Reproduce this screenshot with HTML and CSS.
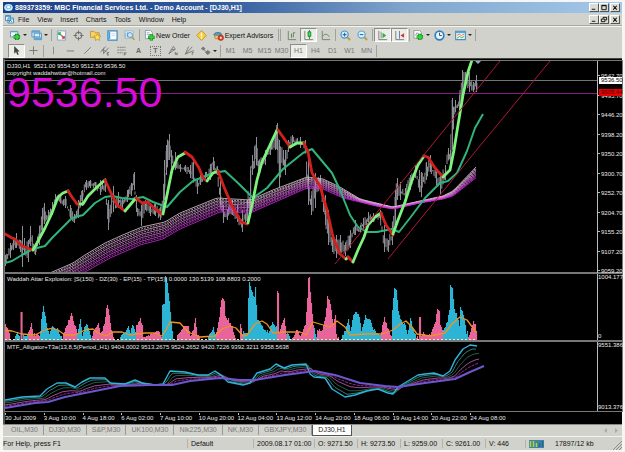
FILE: index.html
```html
<!DOCTYPE html>
<html lang="en">
<head>
<meta charset="utf-8">
<title>MBC Financial Services Ltd. - Demo Account</title>
<link rel="stylesheet" href="styles.css">
</head>
<body>
<div class="window">
  <header class="titlebar">
    <svg class="app-icon" viewBox="0 0 9 9"><ellipse cx="4.500" cy="4.500" rx="4.300" ry="3.500" fill="#c4ecf8"/><ellipse cx="4.500" cy="4" rx="2.800" ry="1.800" fill="#3ca0c8"/><path d="M2 4l2.500-1.500L7 4 4.500 5.500z" fill="#fff"/></svg>
    <h1>889373359: MBC Financial Services Ltd. - Demo Account - [DJ30,H1]</h1>
    <div class="winbtns">
      <button aria-label="Minimize"><svg viewBox="0 0 9 8"><path d="M2 6h4" stroke="#000"/></svg></button><button aria-label="Maximize"><svg viewBox="0 0 9 8"><path d="M2 1.500h5v5H2zM2 2h5" fill="none" stroke="#000"/></svg></button><button class="close" aria-label="Close"><svg viewBox="0 0 9 8"><path d="M2.500 2l4 4.500m0-4.500l-4 4.500" stroke="#000" stroke-width="1.200"/></svg></button>
    </div>
  </header>
  <nav class="menubar">
    <svg class="app-icon" viewBox="0 0 9 9"><path d="M.5.5h5v5h-5zM3 3h5.500v5H3z" fill="#eaf6fc" stroke="#4f90bc"/><path d="M1 1.500h4M3.500 4h4.500" stroke="#4fa8d8"/><path d="M4 7l1.500-1.500L7 6.500" fill="none" stroke="#479"/></svg>
    <button>File</button><button>View</button><button>Insert</button><button>Charts</button><button>Tools</button><button>Window</button><button>Help</button>
    <div class="winbtns">
      <button aria-label="Minimize chart"><svg viewBox="0 0 9 8"><path d="M2 6h4" stroke="#000"/></svg></button><button aria-label="Restore chart"><svg viewBox="0 0 9 8"><path d="M1.500 3.500h4v3h-4zM3.500 3V1.500h4v3H6" fill="none" stroke="#000"/></svg></button><button class="close" aria-label="Close chart"><svg viewBox="0 0 9 8"><path d="M2.500 2l4 4.500m0-4.500l-4 4.500" stroke="#000" stroke-width="1.200"/></svg></button>
    </div>
  </nav>
  <div class="toolbar main-tools">
    <button class="drop" aria-label="New chart"><svg viewBox="0 0 12 12"><path d="M.5 1.500h8v6h-8z" fill="#eef7fc" stroke="#5c94b8"/><path d="M.5 2h8" stroke="#5aa0d0"/><path d="M7.500 4v7M4 7.500h7" stroke="#0b7a20" stroke-width="4"/><path d="M7.500 5v5.500M4.500 7.500h6" stroke="#35d235" stroke-width="2.400"/></svg></button>
    <button class="drop" aria-label="Profiles"><svg viewBox="0 0 12 12"><path d="M3.500 3.500h8v7h-8zM1 1h8.500v6.500H1z" fill="#d9eefa" stroke="#4f8fba"/><path d="M1 2h8.500" stroke="#57a6da" stroke-width="2"/><path d="M4 9h7" stroke="#57a6da" stroke-width="2"/></svg></button>
    <i class="sep"></i>
    <button aria-label="Market watch"><svg viewBox="0 0 12 12"><path d="M1.500 1h9v10h-9z" fill="#f5fbff" stroke="#74a7c4"/><path d="M3 3l3 3M3 5.500V3h2.500" stroke="#28b048" stroke-width="1.300" fill="none"/><path d="M6 6l3 3M9 6.500V9H6.500" stroke="#d33" stroke-width="1.300" fill="none"/></svg></button>
    <button aria-label="Data window"><svg viewBox="0 0 12 12"><circle cx="6" cy="6" r="3.500" fill="none" stroke="#7a7a78" stroke-width="1.300"/><path d="M6 .5v4M6 7.500v4M.5 6h4M7.500 6h4" stroke="#6b6b6b"/></svg></button>
    <button aria-label="Navigator"><svg viewBox="0 0 12 12"><path d="M.5 1.500h4l1 1.500H10v5H.5z" fill="#f4d36a" stroke="#c7952c"/><path d="M8 4l1.200 2.400 2.600.3-1.900 1.900.5 2.800L8 10.200l-2.400 1.200.5-2.800-1.900-1.900 2.600-.3z" fill="#ffe25a" stroke="#b98a20" stroke-width=".7"/></svg></button>
    <button aria-label="Terminal"><svg viewBox="0 0 12 12"><path d="M1 1h10v10H1z" fill="#f8fcff" stroke="#3e87bd" stroke-width="1.300"/><path d="M2.500 2v8" stroke="#4aa0de" stroke-width="2"/><path d="M5 4h4M5 6h4" stroke="#c2d8e6"/></svg></button>
    <button aria-label="Strategy tester"><svg viewBox="0 0 12 12"><path d="M1 1h9v8H1z" fill="#eef7fd" stroke="#90b6cc"/><path d="M2 8V3M4 8V2" stroke="#68a8cc"/><circle cx="6.500" cy="5.500" r="2.700" fill="#cfeafb" stroke="#5590b8"/><path d="M8.500 7.500l3 3.500" stroke="#c99a3a" stroke-width="1.700"/></svg></button>
    <i class="sep"></i>
    <button class="labelled order"><svg viewBox="0 0 12 12"><path d="M1.500.5H7l2 2v7H1.500z" fill="#fff" stroke="#7f98a8"/><path d="M3 3h3M3 5h4" stroke="#91a7b5"/><path d="M8 4.500v7M4.500 8h7" stroke="#0b7a20" stroke-width="3.600"/><path d="M8 5v6M5 8h6" stroke="#35d235" stroke-width="2.200"/></svg>New Order</button>
    <button aria-label="MetaEditor"><svg viewBox="0 0 12 12"><path d="M6 .7L11.300 6 6 11.300.7 6z" fill="#f6cf3e" stroke="#c99414"/><path d="M6 3v4M6 8v1.500" stroke="#fff" stroke-width="1.400"/></svg></button>
    <button class="labelled expert"><svg viewBox="0 0 12 12"><path d="M1 5.500C1 2 9 2 9.500 5L6 7z" fill="#4aa2d2" stroke="#2d6e9b"/><path d="M1.500 6h6v3.500h-5z" fill="#f2c66b" stroke="#b8862e"/><circle cx="8.500" cy="8.500" r="3" fill="#e3391d" stroke="#a8230e" stroke-width=".6"/><path d="M7.500 7.500h2v2h-2z" fill="#fff"/></svg>Expert Advisors</button>
    <i class="grip"></i>
    <button aria-label="Bar chart"><svg viewBox="0 0 12 12"><path d="M2.500 1v9.500H11" fill="none" stroke="#777"/><path d="M6 8.500V4M8 3v5M8 3h2" stroke="#4a8c4a" fill="none"/></svg></button>
    <button class="on" aria-label="Candlesticks"><svg viewBox="0 0 12 12"><path d="M2 1v9.500h9" fill="none" stroke="#777"/><path d="M7 0v10" stroke="#188a2b"/><path d="M5.500 2h3v5h-3z" fill="#3ee04e" stroke="#188a2b"/></svg></button>
    <button aria-label="Line chart"><svg viewBox="0 0 12 12"><path d="M2.500 1v9.500H11" fill="none" stroke="#777"/><path d="M2.500 7Q6 2 10.500 7.500" fill="none" stroke="#4c9a4c"/></svg></button>
    <i class="sep"></i>
    <button aria-label="Zoom in"><svg viewBox="0 0 12 12"><path d="M8 8l3 3" stroke="#c79b2f" stroke-width="2.200"/><circle cx="5" cy="5" r="3.900" fill="#dcf2fd" stroke="#3f92c8" stroke-width="1.300"/><path d="M3 5h4M5 3v4" stroke="#266fa8" stroke-width="1.200"/></svg></button>
    <button aria-label="Zoom out"><svg viewBox="0 0 12 12"><path d="M8 8l3 3" stroke="#c79b2f" stroke-width="2.200"/><circle cx="5" cy="5" r="3.900" fill="#dcf2fd" stroke="#5ca3cf" stroke-width="1.300"/><path d="M3 5h4" stroke="#266fa8" stroke-width="1.200"/></svg></button>
    <i class="sep"></i>
    <button class="on" aria-label="Auto scroll"><svg viewBox="0 0 12 12"><path d="M2 1v9.500h9" fill="none" stroke="#777"/><path d="M4.500 2v7" stroke="#888"/><path d="M6 3l4 3-4 3z" fill="#28b13c"/></svg></button>
    <button class="on" aria-label="Chart shift"><svg viewBox="0 0 12 12"><path d="M2 1v9.500h9" fill="none" stroke="#777"/><path d="M6 1v8.500" stroke="#3f82b8"/><path d="M11 3.500L7 6l4 2.500z" fill="#d0392a"/></svg></button>
    <i class="sep"></i>
    <button class="drop" aria-label="Indicators"><svg viewBox="0 0 12 12"><path d="M1 .5h6l2 2V9H1z" fill="#f8fcff" stroke="#9a9a94"/><path d="M2.500 6l2-3 2 2" fill="none" stroke="#888"/><path d="M7.500 4v7M4 7.500h7" stroke="#0b7a20" stroke-width="3.600"/><path d="M7.500 4.500v6M4.500 7.500h6" stroke="#35d235" stroke-width="2.200"/></svg></button>
    <button class="drop" aria-label="Periods"><svg viewBox="0 0 12 12"><circle cx="6" cy="6" r="4.700" fill="#e9f6fe" stroke="#2e7ec2" stroke-width="1.800"/><path d="M6 3v3h2.500" fill="none" stroke="#345"/></svg></button>
    <button class="drop" aria-label="Templates"><svg viewBox="0 0 12 12"><path d="M.7 1.500h10.600v9H.7z" fill="#f6fbf6" stroke="#4e8db8" stroke-width="1.200"/><path d="M1 2.500h10" stroke="#58a7dc" stroke-width="2"/><path d="M2 6l2.500-1.500L7 6l3-1.500" fill="none" stroke="#c77"/><path d="M2 9l3-2 2 1.500L10 7" fill="none" stroke="#3a9c4c"/></svg></button>
    <i class="sep"></i>
  </div>
  <div class="toolbar draw-tools">
    <button class="on" aria-label="Cursor"><svg viewBox="0 0 12 12"><path d="M3.500 1v8.500l2-2 1.500 3.500 1.500-.8-1.500-3.200h2.500z" fill="#444"/></svg></button>
    <button aria-label="Crosshair"><svg viewBox="0 0 12 12"><path d="M6 1.500v9M1.500 6h9" stroke="#747470"/></svg></button>
    <i class="sep"></i>
    <button aria-label="Vertical line"><svg viewBox="0 0 12 12"><path d="M6 2v8" stroke="#888"/></svg></button>
    <button aria-label="Horizontal line"><svg viewBox="0 0 12 12"><path d="M2 6.500h8" stroke="#777"/></svg></button>
    <button aria-label="Trendline"><svg viewBox="0 0 12 12"><path d="M2.500 9.500l7-7" stroke="#777"/></svg></button>
    <button aria-label="Equidistant channel"><svg viewBox="0 0 12 12"><path d="M1.500 8l6-6.500M4.500 10l6-7M3 5l5 2M5 3v6" stroke="#777"/><path d="M11 8H9v3h2M9 9.500h1.500" fill="none" stroke="#666" stroke-width=".8"/></svg></button>
    <button aria-label="Fibonacci retracement"><svg viewBox="0 0 12 12"><path d="M1.500 2.500h9M1.500 5.500h9M1.500 8.500h6" stroke="#777" stroke-dasharray="2 .6"/><path d="M9 11.500v-3h2.500M9 10h2" fill="none" stroke="#666" stroke-width=".8"/></svg></button>
    <button class="glyph" aria-label="Text">A</button>
    <button class="glyph" aria-label="Text label"><span class="boxed">T</span></button>
    <button aria-label="Gann line"><svg viewBox="0 0 12 12"><path d="M2 9.500l5-8 2 3L2 9.500M4 5h5" fill="none" stroke="#777"/><path d="M9 11V8l2 3V8" fill="none" stroke="#666" stroke-width=".8"/></svg></button>
    <button aria-label="Gann fan"><svg viewBox="0 0 12 12"><path d="M1.500 10L5 1.500M1.500 10L9 2M1.500 10L10.500 6" fill="none" stroke="#777"/><path d="M9 11V8h2" fill="none" stroke="#666" stroke-width=".8"/></svg></button>
    <button class="drop" aria-label="Arrows"><svg viewBox="0 0 12 12"><path d="M1 4l2.500-2.500L6 4l-2.500 2z" fill="#777"/><path d="M6 8l2.500-2L11 8l-2.500 2.500zM4 5l4 3" fill="#777" stroke="#777"/></svg></button>
    <i class="sep"></i>
    <button>M1</button><button>M5</button><button>M15</button><button>M30</button><button class="on">H1</button><button>H4</button><button>D1</button><button>W1</button><button>MN</button>
    <i class="sep"></i>
  </div>

  <main class="charts">
    <section class="panel price">
      <svg id="price" class="plot" viewBox="5 61 592 211" preserveAspectRatio="none"></svg>
      <div class="caption"><p>DJ30,H1&nbsp; 9521.00 9554.50 9512.50 9536.50</p><p>copyright waddahwttar@hotmail.com</p><strong>9536.50</strong></div>
      <div class="scale prices">
        <span>9542.70</span><span>9495.70</span><span>9446.20</span><span>9398.20</span><span>9350.20</span><span>9300.70</span><span>9252.70</span><span>9204.70</span><span>9155.20</span><span>9107.20</span><span>9059.20</span>
        <b class="tag bid">9536.50</b><b class="tag stop">9505.44</b>
      </div>
    </section>
    <section class="panel explosion">
      <svg id="explosion" class="plot" viewBox="5 275 592 66" preserveAspectRatio="none"></svg>
      <div class="caption"><p>Waddah Attar Explosion: [S(150) - DZ(30) - EP(15) - TP(15)] 0.0000 130.5139 108.8803 0.2000</p></div>
      <div class="scale"><span class="bare">1004.177</span><span class="bare">0</span></div>
    </section>
    <section class="panel alligator">
      <svg id="alligator" class="plot" viewBox="5 343 592 69" preserveAspectRatio="none"></svg>
      <div class="caption"><p>MTF_Alligator+T3a(13,8,5(Period_H1) 9404.0002 9513.2675 9524.2652 9420.7226 9392.3211 9358.5638</p></div>
      <div class="scale"><span class="bare">9551.386</span><span class="bare">9013.376</span></div>
    </section>
    <div class="dates">
      <span>30 Jul 2009</span><span>3 Aug 10:00</span><span>4 Aug 18:00</span><span>6 Aug 02:00</span><span>7 Aug 10:00</span><span>10 Aug 20:00</span><span>12 Aug 04:00</span><span>13 Aug 12:00</span><span>14 Aug 20:00</span><span>18 Aug 06:00</span><span>19 Aug 14:00</span><span>20 Aug 22:00</span><span>24 Aug 08:00</span>
    </div>
  </main>

  <nav class="tabs">
    <button>OIL,M30</button><button>DJ30,M30</button><button>S&amp;P,M30</button><button>UK100,M30</button><button>Nik225,M30</button><button>NK,M30</button><button>GBXJPY,M30</button><button class="active">DJ30,H1</button>
    <span class="arrows"><svg viewBox="0 0 14 6"><path d="M3 0v5L0 2.500zM11 0v5l3-2.500z" fill="#aaa"/></svg></span>
  </nav>
  <footer class="status">
    <span>For Help, press F1</span><span>Default</span><span>2009.08.17 01:00</span><span>O: 9271.50</span><span>H: 9273.50</span><span>L: 9259.00</span><span>C: 9261.00</span><span>V: 446</span>
    <span class="net"><svg viewBox="0 0 15 8"><path d="M0 0h15v8H0z" fill="#3c86a0"/><path d="M1.500 1v6M4.500 1v6M7.500 3v4" stroke="#b8cf3c" stroke-width="1.500"/><path d="M10.500 3v4M13.500 1v6" stroke="#2d5fa0" stroke-width="1.500"/></svg></span>
    <span class="traffic">17897/12 kb</span>
    <svg class="resize" viewBox="0 0 9 9"><path d="M0 9l9-9M3 9l6-6M6 9l3-3" stroke="#8c8c86"/></svg>
  </footer>
</div>
<script src="charts.js"></script>
</body>
</html>
```
FILE: styles.css
```css
* { box-sizing: border-box; }
body {
  margin: 0;
  background: #f6f6f4;
  color: #111;
  font: 7px/9px "Liberation Sans", Arial, sans-serif;
}
button {
  margin: 0;
  padding: 0;
  border: 0;
  background: none;
  color: inherit;
  font: inherit;
}
h1, p { margin: 0; }
svg { display: block; }

.window {
  display: flex;
  flex-direction: column;
  height: 100vh;
  padding: 2px 3px;
}
.titlebar, .menubar, .toolbar, .tabs, .status {
  display: flex;
  align-items: center;
  flex: none;
  background: #d2d2cc;
}
.titlebar {
  height: 11px;
  padding-left: 1px;
  background: linear-gradient(90deg, #1c3e88, #315b9d 35%, #7fa5cc 65%, #a4c9ea);
  color: #fff;
}
.titlebar h1 { margin-left: 2px; font-size: 7px; font-weight: 700; white-space: nowrap; }
.app-icon { width: 9px; height: 9px; flex: none; }
.winbtns { display: flex; margin-left: auto; padding-right: 2px; }
.winbtns button {
  width: 10px;
  height: 9px;
  background: #dcdcd6;
  border: 1px solid;
  border-color: #fff #55554f #55554f #fff;
}
.winbtns .close { margin-left: 1px; }
.winbtns svg { width: 8px; height: 7px; }

.menubar { height: 13px; padding-left: 2px; border-bottom: 1px solid #a8a89e; }
.menubar > button { margin-left: 8px; font-size: 7px; white-space: nowrap; }
.menubar > .app-icon + button { margin-left: 4px; }

.toolbar { padding-left: 5px; }
.main-tools { height: 17px; border-top: 1px solid #f4f4f0; }
.draw-tools { height: 15px; color: #777; }
.toolbar button {
  display: flex;
  align-items: center;
  justify-content: center;
  flex: none;
  width: 17px;
  height: 14px;
}
.toolbar svg { width: 11px; height: 11px; flex: none; }
.toolbar .drop { width: 21px; }
.toolbar .drop::after {
  content: "";
  margin-left: 2px;
  border: 2px solid transparent;
  border-top-color: #222;
  border-bottom: 0;
}
.toolbar .on {
  background: #ecece8;
  border: 1px solid;
  border-color: #8e8e88 #fff #fff #8e8e88;
}
.toolbar .labelled { gap: 1px; white-space: nowrap; color: #111; }
.toolbar .order { width: 52px; }
.toolbar .expert { width: 66px; }
.glyph { font-weight: 700; color: #666; }
.boxed { padding: 0 2px; border: 1px dotted #777; line-height: 8px; }
.sep { width: 1px; height: 12px; margin: 0 1px; background: #a2a29c; }
.grip { width: 3px; height: 12px; margin: 0 2px; border: solid #a2a29c; border-width: 0 1px; }

.charts {
  display: grid;
  grid-template-rows: 211fr 66fr 69fr 11px;
  row-gap: 2px;
  flex: 1;
  min-height: 0;
  padding-top: 2px;
  background: #000;
  border-left: 2px solid #55554f;
  border-top: 1px solid #44443e;
  color: #e8e8e8;
  font-size: 6px;
  line-height: 7px;
}
.panel {
  display: grid;
  grid-template-columns: minmax(0, 1fr) 25px;
  position: relative;
  min-height: 0;
  outline: 1px solid #777;
}
.plot { width: 100%; height: 100%; min-height: 0; }
.caption { position: absolute; top: 2px; left: 2px; white-space: nowrap; }
.caption strong {
  display: block;
  color: #d80cd8;
  font-size: 43px;
  font-weight: 400;
  line-height: 30px;
}
.scale {
  display: flex;
  flex-direction: column;
  justify-content: space-between;
  position: relative;
  min-height: 0;
  border-left: 1px solid #bbb;
  white-space: nowrap;
}
.prices { padding-top: 12px; margin-bottom: -3px; }
.scale span::before {
  content: "";
  display: inline-block;
  width: 2px;
  height: 1px;
  margin-right: 1px;
  vertical-align: 2px;
  background: #bbb;
}
.scale .bare::before { display: none; }
.tag { position: absolute; left: 1px; right: 0; padding-left: 2px; font-weight: 400; }
.bid { top: 16px; background: #fff; color: #000; }
.stop { top: 28px; background: #e60000; color: #500; }
.dates {
  display: grid;
  grid-template-columns: repeat(13, minmax(0, 1fr)) 113px;
  white-space: nowrap;
}
.dates span { padding-top: 3px; }
.dates span::before {
  content: "";
  display: block;
  width: 1px;
  height: 2px;
  margin-top: -3px;
  background: #bbb;
}

.tabs { height: 12px; padding-left: 3px; border-top: 1px solid #888; color: #777; align-items: stretch; }
.tabs button { padding: 0 5px; border-right: 1px solid #999; line-height: 10px; margin-bottom: 1px; white-space: nowrap; }
.tabs .active { margin: 0; background: #fff; color: #222; border: 1px solid #555; border-top: 0; }
.arrows { width: 14px; margin: 3px 4px 0 auto; }
.status {
  display: grid;
  grid-template-columns: 184fr 66fr 61fr 43fr 43fr 42fr 43fr 40fr 27fr 61fr 9px;
  height: 14px;
  border-top: 1px solid #f2f2ee;
  white-space: nowrap;
}
.status span { padding-left: 3px; border-left: 1px solid #b2b2ac; }
.status span:first-child { padding-left: 0; border: 0; }
.status .traffic { border: 0; }
.net svg { width: 15px; height: 8px; }
.resize { width: 9px; height: 9px; align-self: end; }
```
FILE: charts.js
```js
const NS = "http://www.w3.org/2000/svg";

function add(parent, name, attrs) {
  const el = document.createElementNS(NS, name);
  for (const key in attrs) el.setAttribute(key, attrs[key]);
  parent.appendChild(el);
}

const parse = text => text.trim().split(/\s+/).map(p => p.split(",").map(Number));

function valueAt(points, x, col = 1) {
  if (x <= points[0][0]) return points[0][col];
  for (let i = 1; i < points.length; i++) {
    const a = points[i - 1], b = points[i];
    if (x <= b[0]) return a[col] + (b[col] - a[col]) * (x - a[0]) / (b[0] - a[0]);
  }
  return points[points.length - 1][col];
}

function line(svg, points, stroke, width, extra = {}) {
  add(svg, "polyline", {
    points: points.map(p => p.join(",")).join(" "),
    fill: "none", stroke, "stroke-width": width, "stroke-linejoin": "round", ...extra
  });
}

let seed = 7;
const random = () => (seed = (seed * 16807) % 2147483647) / 2147483647;

// Price panel
const price = document.getElementById("price");
line(price, [[5, 80.5], [597, 80.5]], "#70757a", 1);
line(price, [[5, 93.5], [597, 93.5]], "#8a1a8a", 1);

const range = parse(`5,255,266 10,243,258 13,237,250 16,233,248 20,240,252 22,226,267 24,238,255 28,240,262 30,226,246
35,245,255 39,226,245 42,208,230 44,203,224 48,210,222 52,202,215 55,194,206 60,194,203 65,196,208 70,205,218 74,214,223
78,200,218 82,190,206 86,180,190 90,180,188 95,182,188 100,180,195 105,178,192 108,200,230 113,186,212 118,192,208
122,198,208 127,190,202 131,183,196 134,172,190 136,195,212 141,205,226 145,200,210 150,205,216 155,203,216 160,207,220
163,195,215 164,160,200 166,145,175 169,134,160 171,150,170 175,152,170 180,164,172 185,165,172 190,165,178 193,158,182
197,180,194 200,175,185 205,172,180 210,165,180 213,157,170 217,166,175 220,180,205 223,205,223 227,210,220 232,200,215
237,205,222 242,210,232 247,200,222 250,170,215 252,155,175 256,137,165 259,160,175 265,150,165 270,145,155 275,130,150
277,123,150 279,140,187 283,150,165 285,150,175 288,140,152 292,135,145 300,137,148 305,140,150 308,150,205 311,195,215
315,173,208 320,175,190 325,195,225 328,210,245 332,235,252 336,235,258 340,235,255 345,243,256 350,230,248 355,220,235
360,225,232 363,218,230 368,212,225 373,213,222 380,210,220 384,225,252 388,240,252 392,225,245 395,190,230 397,178,200
400,182,200 405,188,198 410,175,190 415,165,178 419,170,190 421,172,197 426,162,180 430,155,172 436,170,185 440,172,195
445,165,180 448,148,160 450,150,165 452,98,150 455,100,112 459,95,112 462,70,100 465,72,85 469,72,92 473,82,92 476,75,92`);
let bars = "";
for (let x = 5; x <= 477; x += 1.3) {
  const hi = valueAt(range, x, 1), lo = valueAt(range, x, 2), span = lo - hi;
  const top = hi + span * random() * 0.55, bottom = lo - span * random() * 0.4;
  bars += `M${x.toFixed(1)} ${top.toFixed(1)}V${bottom.toFixed(1)}`;
}
for (const [x, hi, lo] of range) bars += `M${x + 0.5} ${hi}V${lo}`;
add(price, "path", { d: bars, stroke: "#8e8e96", "stroke-width": 1, fill: "none" });

const upper = parse(`50,273 73,263 85,255 105,243 125,234 142,227 165,222 180,213 217,198 250,200 273,190 307,177 323,179 340,187 360,199 376,203 393,207 420,201 443,196 453,191 477,166`);
const lower = parse(`50,288 85,272 110,258 140,245 163,239 180,229 220,212 250,213 273,203 307,188 323,189 343,198 360,202 376,206 393,209 420,203 443,199 453,196 477,177`);
const BANDS = 10;
for (let i = 0; i <= BANDS; i++) {
  const t = i / BANDS, pts = [];
  for (let x = 50; x <= 477; x += 3) pts.push([x, (valueAt(upper, x) * (1 - t) + valueAt(lower, x) * t).toFixed(1)]);
  const mix = (a, b) => Math.round(a + (b - a) * t);
  line(price, pts, `rgb(${mix(225, 200)},${mix(205, 45)},${mix(215, 215)})`, 0.8, i % 2 ? { "stroke-dasharray": "2 1" } : {});
}

line(price, parse(`5,263 12,261 22,255 33,249 45,246 52,238 62,228 72,218 83,215 95,203 105,197 112,196 122,198 132,199 143,197 153,202 167,207 180,192 193,181 213,173 225,171 238,183 253,198 267,188 283,169 303,153 312,149 322,161 332,173 340,190 350,215 358,227 367,232 377,232 392,229 399,232 410,218 425,198 440,183 448,181 457,173 467,151 475,128 483,114`), "#2fb47c", 2);

const UP = "#7df27d", DOWN = "#d3201c";
[
  [DOWN, "5,234 12,238 15,239 22,246 33,250"], [UP, "33,250 37,243 45,228 52,213 58,197 63,193 68,191"],
  [DOWN, "68,191 72,197 77,204 80,204"], [UP, "80,204 83,204 88,196 97,187 105,180"],
  [DOWN, "105,180 111,193 117,205 125,211"], [UP, "125,211 130,205 136,198"],
  [DOWN, "136,198 142,203 148,202 155,209 162,214"], [UP, "163,214 167,195 172,170 178,157 185,153"],
  [DOWN, "185,152 192,157 199,168 203,178 207,181"], [UP, "207,181 213,173 218,171"],
  [DOWN, "218,171 224,187 232,206 241,222 247,224"], [UP, "248,223 252,205 257,180 262,162 270,145 277,130"],
  [DOWN, "278,130 283,137 290,147"], [UP, "290,147 297,143 304,143"],
  [DOWN, "304,143 308,152 312,173 320,186 327,210 333,237 340,254 346,259"], [UP, "346,259 348,257"],
  [DOWN, "348,257 353,262"], [UP, "353,262 358,250 364,237 368,225 375,217 381,213"],
  [DOWN, "381,213 386,225 393,235"], [UP, "393,234 398,220 405,202 412,180 418,165 424,156"],
  [DOWN, "424,156 428,157 435,168 443,177"], [UP, "443,177 450,170 454,150 458,125 463,95 468,72 472,60"]
].forEach(([color, pts]) => line(price, parse(pts), color, 2.8, { "stroke-linecap": "round" }));

line(price, [[335, 264], [423, 156], [500, 61]], "#b01838", 1);
line(price, [[388, 259], [470, 158], [550, 61]], "#b01838", 1);
add(price, "path", { d: "M475 61h6l-3 3z", fill: "#8ab0c8" });

// Explosion histogram: runs of bars as x,top
const explosion = document.getElementById("explosion");
const PINK = "#e8649a", BLUE = "#2cb4d6";
[
  [PINK, "5,325 8,330 10,338"], [BLUE, "14,338 17,332 19,338"], [PINK, "20.5,313 21.5,313"], [BLUE, "23,335 27,337"],
  [PINK, "28,333 31,325 33,335 39,335"], [BLUE, "40,330 42,312 43,307 45,318 47,330 49,335 52,328 57,330 61,338"],
  [PINK, "63,335 67,325 70,316 71,314 73,322 76,330"], [BLUE, "77,334 80,321 82,336 85,325 88,328 91,338"],
  [PINK, "92,335 98,325 100,335 104,325 106,310 107,304 109,315 111,330 113,338"],
  [BLUE, "120,338 125,332 128,326 130,335 132,324 135,332"], [PINK, "136,326 140,320 142,327 143,338 148,337 155,332 158,331 161,338"],
  [BLUE, "162,306 164,306 165,278 167,283 169,303 171,325 173,338"],
  [PINK, "177,335 183,328 188,326 190,337 193,330 195,320 197,334 199,339"], [BLUE, "208,338 213,328 215,336"],
  [PINK, "216,332 219,318 221,300 224,301 225,318 228,320 232,328 235,339"], [PINK, "240,324 242,335"],
  [BLUE, "243,332 247,333 248,300 249,283 252,294 254,298 255,288 256,305 257,320 262,328 268,333 272,323 276,328"],
  [PINK, "277,293 278,293 279,332 284,318 286,335"], [BLUE, "287,335 291,339"],
  [PINK, "292,338 297,330 300,337 305,325 307,300 308,279 309,279 311,305 313,325"], [BLUE, "314,328 316,339"],
  [PINK, "317,330 322,332 325,318 327,296 330,305 333,325 335,315 336,335 338,339"],
  [BLUE, "342,337 347,325 348,319 350,332 353,315 356,312 359,318 361,332 365,317 370,320 373,330 380,335"],
  [PINK, "381,332 384,318 387,328 391,338"],
  [BLUE, "392,310 394,289 396,292 398,312 402,325 405,325 407,335 410,318 412,328 415,335"],
  [PINK, "416,338 418,338 419,318 420,318 421,338 423,333 427,337 430,334 435,323 437,310 439,312 440,325 442,330"],
  [BLUE, "443,332 447,322 449,310 450,286 452,290 454,310 457,318 459,325 460,308 462,312 464,320 466,335 467,330"],
  [PINK, "468,338 471,330 473,322 475,325 476,332"]
].forEach(([fill, text]) => {
  const run = parse(text), end = run[run.length - 1][0];
  let d = "";
  for (let x = run[0][0]; x <= end; x += 1) {
    const y = Math.min(340, Math.round(valueAt(run, x) + (random() - 0.4) * 3));
    d += `M${x} 341V${y}h1.100V341z`;
  }
  add(explosion, "path", { d, fill });
});
line(explosion, [[5, 340.5], [477, 340.5]], "#f2eab8", 1, { "stroke-dasharray": "2 2" });
line(explosion, parse(`5,331 12,332 22,335 35,336 45,331 52,329 58,331 65,336 75,336 85,331 93,330 98,334 107,337 112,333 122,333 130,336 145,334 155,334 162,337 166,331 170,323 180,324 188,333 200,338 215,337 222,330 230,327 236,329 243,337 247,336 255,325 262,322 267,325 273,334 282,333 300,333 306,336 313,323 330,328 337,322 345,328 350,336 365,335 382,335 393,331 400,325 406,322 412,328 417,335 430,337 445,334 452,325 460,318 467,321 476,333`), "#ee9420", 1.3);

// Alligator lines, blended between the fastest and the slowest
const alligator = document.getElementById("alligator");
const fast = parse(`5,401 22,398 40,397 47,390 57,384 66,384 75,388 82,383 90,379 105,379 110,384 125,385 135,381 142,384 155,386 163,385 170,372 185,373 198,376 208,376 215,372 222,377 228,383 243,386 250,384 257,374 270,370 276,365 284,369 292,366 306,365 310,375 314,378 325,379 332,390 345,398 355,396 367,392 378,390 388,394 393,395 398,388 408,382 418,376 425,375 434,374 443,377 450,372 455,361 463,350 470,346 477,347`);
const slow = parse(`5,409 35,404 48,403 65,398 85,394 100,391 120,387 150,386 172,386 190,382 220,379 240,381 255,381 285,376 315,372 335,376 360,384 385,387 398,388 425,384 455,380 470,373 484,367`);
[[0.15, 2, "#2f7f76"], [0.35, 4, "#245c46"], [0.6, 5, "#a04a94"], [0.78, 6, "#8a2c8a"]].forEach(([t, lag, color]) => {
  const pts = [];
  for (let x = 5; x <= 477 + lag / 2; x += 3) pts.push([x, valueAt(fast, x - lag) * (1 - t) + valueAt(slow, x) * t]);
  line(alligator, pts, color, 1, t === 0.78 ? { "stroke-dasharray": "3 1" } : {});
});
line(alligator, fast, "#30b4dc", 1.4);
line(alligator, slow, "#6a58cc", 2);
```
